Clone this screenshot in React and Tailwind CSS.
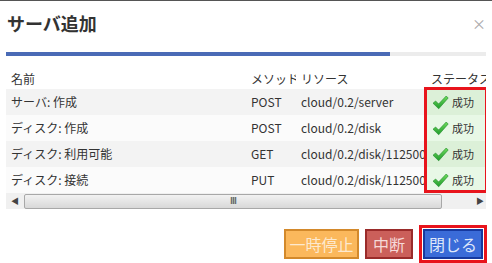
import React from "react";

const rows = [
  { name: "サーバ: 作成", method: "POST", res: "cloud/0.2/server" },
  { name: "ディスク: 作成", method: "POST", res: "cloud/0.2/disk" },
  { name: "ディスク: 利用可能", method: "GET", res: "cloud/0.2/disk/112500000001" },
  { name: "ディスク: 接続", method: "PUT", res: "cloud/0.2/disk/112500000001/to/server" },
];

const Check = () => (
  <svg width="17" height="15" viewBox="0 0 17 15">
    <defs>
      <linearGradient id="ck" x1="0" y1="0" x2="0" y2="1">
        <stop offset="0" stopColor="#6fdc5c" />
        <stop offset="1" stopColor="#1f9a2c" />
      </linearGradient>
    </defs>
    <path d="M1 8.2 L3.6 6 L6.6 9 L14.2 1 L16.2 3 L6.7 13.8 Z" fill="url(#ck)" stroke="#1c8a28" strokeWidth="0.6" />
  </svg>
);

export default function App() {
  return (
    <div
      className="w-[492px] h-[263px] bg-white border-t border-[#555] text-[#333] overflow-hidden"
      style={{ fontFamily: '"Noto Sans CJK JP", "Noto Sans", sans-serif' }}
    >
      <div className="flex items-center justify-between pl-[7px] pr-[6px] pt-[3px] h-[40px]">
        <h1 className="text-[18px] font-bold leading-[24px]">サーバ追加</h1>
        <span className="text-[14px] text-[#aaa] leading-none">×</span>
      </div>

      <div className="mx-[6px] mt-[11px] h-[4px] bg-[#ececec]">
        <div className="h-full w-[80%] bg-[#4a6bb6]" />
      </div>

      <div className="relative mx-[6px] mt-[12px] overflow-hidden text-[12px]">
        <div className="flex h-[21px] items-center whitespace-nowrap">
          <div className="w-[240px] shrink-0 pl-[5px]">名前</div>
          <div className="w-[50px] shrink-0 pl-[5px] overflow-hidden">メソッド</div>
          <div className="w-[130px] shrink-0 pl-[5px]">リソース</div>
          <div className="w-[80px] shrink-0 pl-[5px]">ステータス</div>
        </div>
        {rows.map((r, i) => (
          <div
            key={i}
            className={`flex h-[26px] items-center whitespace-nowrap ${i % 2 === 0 ? "bg-[#f3f3f3]" : "bg-[#fbfbfb]"}`}
          >
            <div className="w-[240px] shrink-0 pl-[5px]">{r.name}</div>
            <div className="w-[50px] shrink-0 pl-[5px]">{r.method}</div>
            <div className="w-[130px] shrink-0 pl-[5px] overflow-hidden">{r.res}</div>
            <div
              className={`w-[80px] h-full shrink-0 pl-[6px] flex items-center gap-[3px] text-[11px] ${i % 2 === 0 ? "bg-[#dcf0d8]" : "bg-[#e8f8e6]"}`}
            >
              <Check />
              <span>成功</span>
            </div>
          </div>
        ))}
        <div className="flex h-[16px] items-center bg-[#f0f0f0]">
          <div className="w-[18px] flex justify-center text-[8px] text-[#444]">◀</div>
          <div className="flex-1 h-[15px] mr-[34px] rounded-[2px] border border-[#a8a8a8] bg-gradient-to-b from-[#f2f2f2] to-[#d8d8d8] flex items-center justify-center">
            <span className="text-[9px] text-[#666] tracking-[-1px] font-bold">III</span>
          </div>
          <div className="w-[10px] text-[8px] text-[#444]">▶</div>
        </div>
        <div className="absolute left-[418px] top-[19px] w-[64px] h-[106px] border-[3px] border-[#e8141c] pointer-events-none" />
      </div>

      <div className="flex justify-end items-center gap-[6px] pr-[5px] mt-[16px]">
        <button className="h-[30px] w-[75px] bg-[#fbb85c] border-2 border-[#d3892b] text-[#fde9cf] text-[16px]">一時停止</button>
        <button className="h-[30px] w-[48px] bg-[#cb5f5a] border-2 border-[#9a2b2a] text-[#f6d9d8] text-[16px]">中断</button>
        <div className="border-[3px] border-[#e8141c] p-px">
          <button className="h-[30px] w-[60px] bg-[#3a6bd8] border-2 border-[#16399f] text-[#dfe7fa] text-[16px]">閉じる</button>
        </div>
      </div>
    </div>
  );
}
